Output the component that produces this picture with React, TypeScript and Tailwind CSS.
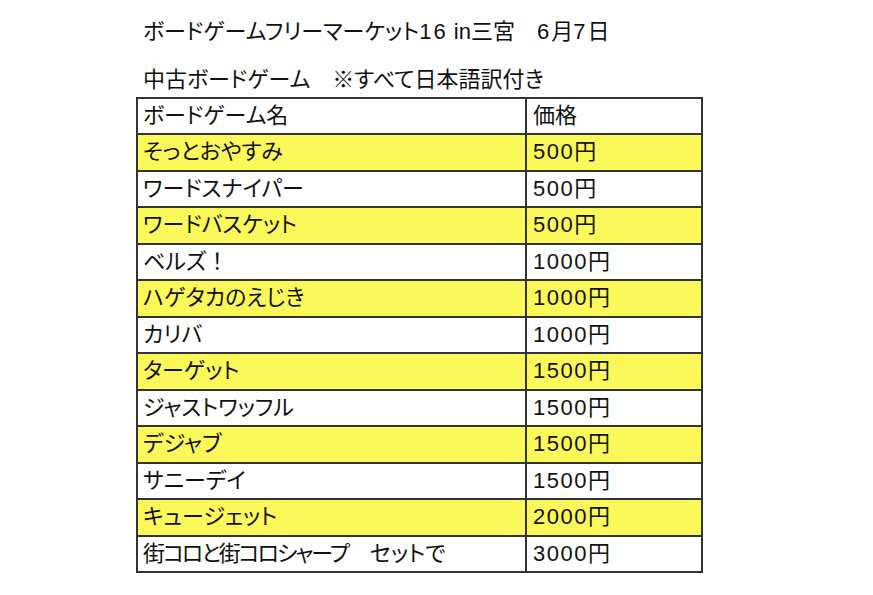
import React from "react";

const rows: { name: React.ReactNode; price: string; hl: boolean }[] = [
  { name: "そっとおやすみ", price: "500", hl: true },
  { name: "ワードスナイパー", price: "500", hl: false },
  { name: "ワードバスケット", price: "500", hl: true },
  {
    name: (
      <>
        ベルズ<span className="[font-feature-settings:normal]">！</span>
      </>
    ),
    price: "1000",
    hl: false,
  },
  { name: "ハゲタカのえじき", price: "1000", hl: true },
  { name: "カリバ", price: "1000", hl: false },
  { name: "ターゲット", price: "1500", hl: true },
  { name: "ジャストワッフル", price: "1500", hl: false },
  { name: "デジャブ", price: "1500", hl: true },
  { name: "サニーデイ", price: "1500", hl: false },
  { name: "キュージェット", price: "2000", hl: true },
  {
    name: (
      <>
        <span className="tracking-[-2px]">街コロと街コロシャープ</span>
        <span className="inline-block w-[22px]" />
        セットで
      </>
    ),
    price: "3000",
    hl: false,
  },
];

export default function App() {
  return (
    <div
      className="w-[873px] h-[595px] bg-white text-[#111] overflow-hidden [font-feature-settings:'palt']"
      style={{ fontFamily: '"Liberation Sans", "Noto Sans CJK JP", sans-serif' }}
    >
      <div className="pl-[143px] pt-[20px] text-[22px] leading-[24px] whitespace-pre">
        ボードゲームフリーマーケット<span className="tracking-[2px]">16</span> in三宮　<span className="tracking-[2px]">6</span>月<span className="tracking-[2px]">7</span>日
      </div>
      <div className="pl-[143px] pt-[24px] text-[22px] leading-[24px] whitespace-pre">
        中古ボードゲーム　※すべて日本語訳付き
      </div>
      <div className="ml-[136px] mt-[5px] w-[567px] border-t-2 border-x-2 border-[#333]">
        <div className="flex h-[36px] border-b-2 border-[#333] text-[22px] leading-[24px]">
          <div className="w-[389px] pl-[5px] flex items-center border-r-2 border-[#333] whitespace-pre">
            ボードゲーム名
          </div>
          <div className="flex-1 pl-[6px] flex items-center">価格</div>
        </div>
        {rows.map((r, i) => (
          <div
            key={i}
            className={`flex h-[36.5px] border-b-2 border-[#333] text-[22px] leading-[24px] ${
              r.hl ? "bg-[#fbf85a]" : "bg-white"
            }`}
          >
            <div className="w-[389px] pl-[5px] flex items-center border-r-2 border-[#333] whitespace-nowrap">
              {r.name}
            </div>
            <div className="flex-1 pl-[6px] flex items-center">
              <span className="tracking-[1.5px]">{r.price}</span>円
            </div>
          </div>
        ))}
      </div>
    </div>
  );
}
